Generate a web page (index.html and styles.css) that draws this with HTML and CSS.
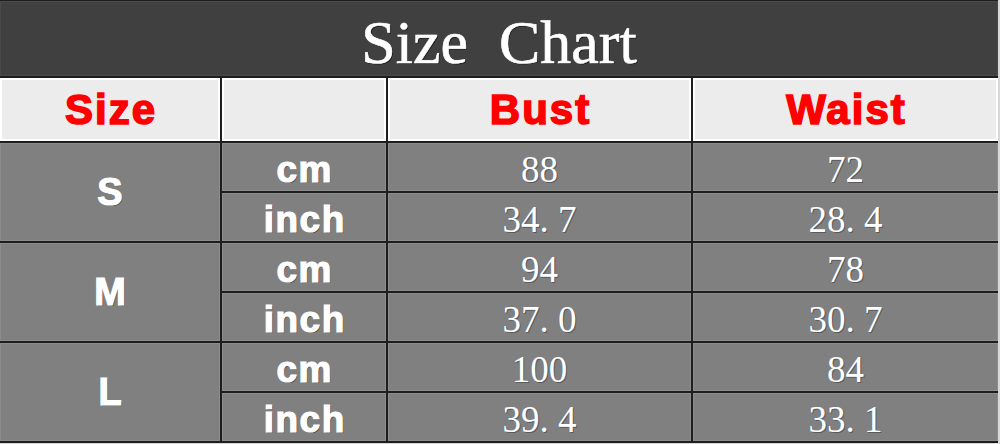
FILE: index.html
```html
<!DOCTYPE html>
<html lang="en">
<head>
<meta charset="utf-8">
<title>Size Chart</title>
<link rel="stylesheet" href="styles.css">
</head>
<body>
<div class="chart">
  <div class="title">Size&nbsp; Chart</div>

  <div class="head">Size</div>
  <div class="head"></div>
  <div class="head">Bust</div>
  <div class="head">Waist</div>

  <div class="size">S</div>
  <div class="unit">cm</div><div class="val">88</div><div class="val">72</div>
  <div class="unit">inch</div><div class="val">34. 7</div><div class="val">28. 4</div>

  <div class="size">M</div>
  <div class="unit">cm</div><div class="val">94</div><div class="val">78</div>
  <div class="unit">inch</div><div class="val">37. 0</div><div class="val">30. 7</div>

  <div class="size">L</div>
  <div class="unit">cm</div><div class="val">100</div><div class="val">84</div>
  <div class="unit">inch</div><div class="val">39. 4</div><div class="val">33. 1</div>
</div>
</body>
</html>
```

FILE: styles.css
```css
html, body {
  margin: 0;
  padding: 0;
  background: #d8d8d8;
}

.chart {
  width: 998px;
  box-sizing: border-box;
  display: grid;
  grid-template-columns: 220px 164px 303px 305px;
  grid-template-rows: 75px 63px repeat(6, 48px);
  gap: 2px;
  padding: 1px 2px 2px 0;
  background: #1e1e1e;
}

.chart > div {
  display: flex;
  align-items: center;
  justify-content: center;
  box-sizing: border-box;
}

.title {
  grid-column: 1 / -1;
  background: #404040;
  color: #ffffff;
  font-family: "Liberation Serif", "Times New Roman", serif;
  font-size: 62px;
  padding-top: 8px;
  -webkit-text-stroke: 0.6px #ffffff;
  text-shadow: 1px 1px 0 #1a1a1a, 0 0 1px #888;
  box-shadow: inset 0 0 0 1px #4a4a4a;
}

.head {
  background: #ececec;
  box-shadow: inset 0 0 0 2px #ffffff;
  color: #ff0000;
  font-family: "Liberation Sans", Arial, sans-serif;
  font-weight: 700;
  font-size: 42px;
  letter-spacing: 2px;
  padding-left: 2px;
  -webkit-text-stroke: 1.6px #ff0000;
  text-shadow: 0 0 2px #ffffff, 1px 1px 0 #ffffff;
}

.size,
.unit,
.val {
  background: #808080;
  box-shadow: inset 0 0 0 1px #8c8c8c;
  color: #ffffff;
}

.size {
  grid-row: span 2;
  grid-column: 1;
  font-family: "Liberation Sans", Arial, sans-serif;
  font-weight: 700;
  font-size: 38px;
  -webkit-text-stroke: 1.2px #ffffff;
  text-shadow: 1px 1px 0 #4a4038;
}

.unit {
  grid-column: 2;
  font-family: "Liberation Sans", Arial, sans-serif;
  font-weight: 700;
  font-size: 37px;
  letter-spacing: 1.5px;
  padding-left: 1.5px;
  padding-top: 6px;
  -webkit-text-stroke: 1.2px #ffffff;
  text-shadow: 1px 1px 0 #4a4038;
}

.val {
  font-family: "Liberation Serif", "Times New Roman", serif;
  font-size: 37px;
  padding-top: 4px;
  text-shadow: -1px 0 0 #6f7c8c, 1px 1px 0 #5a5a5a;
}
```
